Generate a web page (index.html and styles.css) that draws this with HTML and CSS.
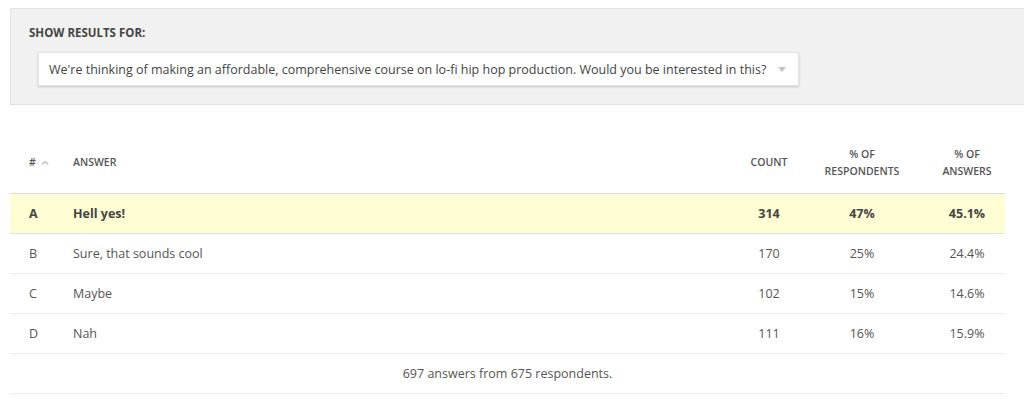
FILE: index.html
```html
<!DOCTYPE html>
<html>
<head>
<meta charset="utf-8">
<link rel="stylesheet" href="styles.css">
</head>
<body>
<div class="page">
  <section class="filter">
    <div class="filter-label">SHOW RESULTS FOR:</div>
    <div class="select">
      <span class="select-text">We're thinking of making an affordable, comprehensive course on lo-fi hip hop production. Would you be interested in this?</span>
      <span class="caret"></span>
    </div>
  </section>

  <div class="results">
    <div class="row head">
      <div class="c-id">#<svg class="sort" width="8" height="6" viewBox="0 0 8 6"><path d="M1 4.5 L4 1.5 L7 4.5" fill="none" stroke="#888" stroke-width="1"/></svg></div>
      <div class="c-ans">ANSWER</div>
      <div class="c-num">COUNT</div>
      <div class="c-num">% OF<br>RESPONDENTS</div>
      <div class="c-num">% OF<br>ANSWERS</div>
    </div>
    <div class="row top">
      <div class="c-id">A</div>
      <div class="c-ans">Hell yes!</div>
      <div class="c-num">314</div>
      <div class="c-num">47%</div>
      <div class="c-num">45.1%</div>
    </div>
    <div class="row">
      <div class="c-id">B</div>
      <div class="c-ans">Sure, that sounds cool</div>
      <div class="c-num">170</div>
      <div class="c-num">25%</div>
      <div class="c-num">24.4%</div>
    </div>
    <div class="row">
      <div class="c-id">C</div>
      <div class="c-ans">Maybe</div>
      <div class="c-num">102</div>
      <div class="c-num">15%</div>
      <div class="c-num">14.6%</div>
    </div>
    <div class="row">
      <div class="c-id">D</div>
      <div class="c-ans">Nah</div>
      <div class="c-num">111</div>
      <div class="c-num">16%</div>
      <div class="c-num">15.9%</div>
    </div>
    <div class="summary">697 answers from 675 respondents.</div>
  </div>
</div>
</body>
</html>
```

FILE: styles.css
```css
html, body {
  margin: 0;
  padding: 0;
  background: #fff;
  overflow: hidden;
}
body {
  font-family: "Open Sans", "Liberation Sans", sans-serif;
  color: #555;
}
.page {
  padding: 8px 0 0 10px;
}
.filter {
  background: #f1f1f1;
  border: 1px solid #e3e3e3;
  border-right: none;
  height: 97px;
  box-sizing: border-box;
  padding: 16px 0 0 18px;
}
.filter-label {
  font-size: 11.5px;
  font-weight: 700;
  color: #444;
  line-height: 15px;
}
.select {
  margin: 12px 0 0 9px;
  width: 761px;
  height: 34px;
  box-sizing: border-box;
  background: #fff;
  border: 1px solid #e4e4e4;
  box-shadow: 0 1px 2px rgba(0,0,0,0.18);
  display: flex;
  align-items: center;
  padding: 0 0 0 10px;
}
.select-text {
  font-size: 12.5px;
  color: #444;
  white-space: nowrap;
}
.caret {
  margin-left: 12px;
  width: 0;
  height: 0;
  border-left: 4px solid transparent;
  border-right: 4px solid transparent;
  border-top: 5px solid #c4c4c4;
}
.results {
  width: 995px;
  margin-top: 29px;
}
.row {
  display: grid;
  grid-template-columns: 53px 1fr 52px 134px 76px;
  align-items: center;
  height: 40px;
  box-sizing: border-box;
  border-bottom: 1px solid #ececec;
  font-size: 12.5px;
  color: #555;
}
.row.head {
  height: 60px;
  padding-bottom: 2px;
  border-bottom: 1px solid #dcdcdc;
  font-size: 10.5px;
  font-weight: 600;
  color: #555;
  line-height: 17px;
}
.row.top {
  background: #fffdd3;
  font-weight: 700;
  color: #444;
  border-bottom: 1px solid #e2e2e2;
}
.c-id {
  padding-left: 19px;
  display: flex;
  align-items: center;
}
.sort {
  margin-left: 5px;
}
.c-ans {
  padding-left: 10px;
}
.c-num {
  text-align: center;
}
.summary {
  height: 40px;
  box-sizing: border-box;
  line-height: 39px;
  text-align: center;
  font-size: 12.5px;
  color: #555;
  border-bottom: 1px solid #ececec;
}
```
